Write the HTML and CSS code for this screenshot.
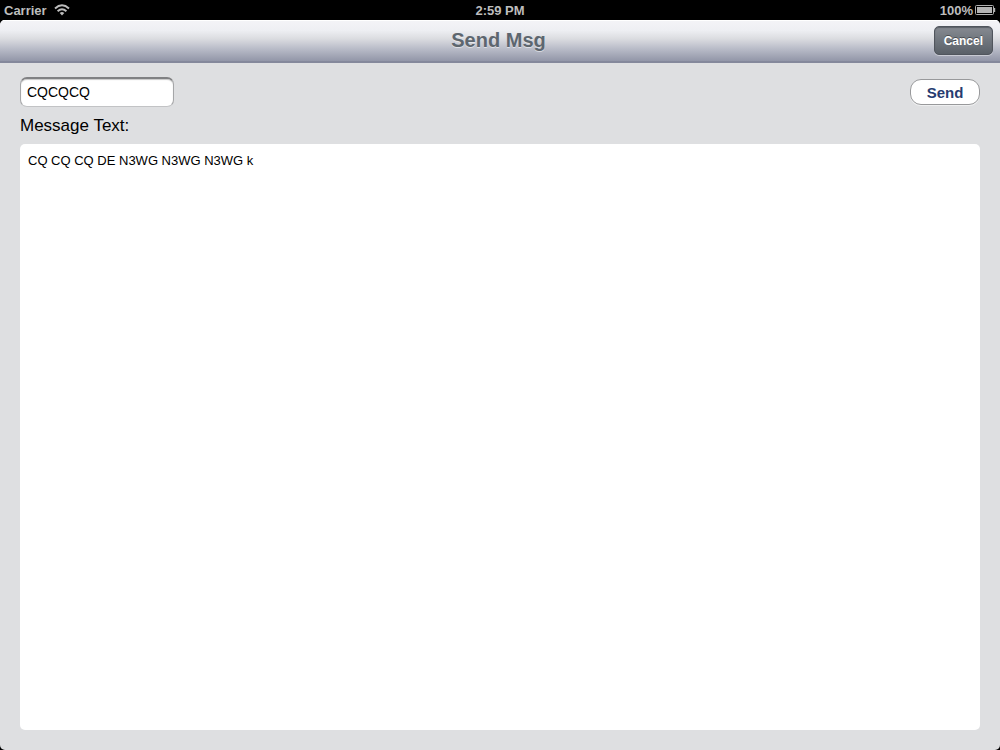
FILE: index.html
```html
<!DOCTYPE html>
<html lang="en">
<head>
<meta charset="utf-8">
<meta name="viewport" content="width=device-width, initial-scale=1">
<title>Send Msg</title>
<link rel="stylesheet" href="styles.css">
</head>
<body>
<div class="status">
  <div class="status-left">
    <span>Carrier</span>
    <svg class="wifi" viewBox="0 0 16 12" aria-hidden="true">
      <path d="M1 4.4Q8-1.8 15 4.4M3.6 7.2Q8 3.3 12.4 7.2" fill="none" stroke="#bdbdbd" stroke-width="2"/>
      <path d="M5.7 9Q8 7.2 10.3 9L8 11.4z" fill="#bdbdbd"/>
    </svg>
  </div>
  <time class="clock">2:59 PM</time>
  <div class="status-right">
    <span>100%</span>
    <svg class="battery" viewBox="0 0 21 10" aria-hidden="true">
      <rect x=".5" y=".5" width="18" height="9" rx="1" fill="none" stroke="#b0b0b0"/>
      <rect x="2" y="2" width="15" height="6" fill="#b4b4b4"/>
      <path d="M19 3h1.2v4H19z" fill="#b0b0b0"/>
    </svg>
  </div>
</div>
<form class="app">
  <header class="navbar">
    <h1 class="title">Send Msg</h1>
    <button class="cancel" type="button">Cancel</button>
  </header>
  <main class="content">
    <div class="row">
      <input class="name" type="text" value="CQCQCQ" aria-label="Message name">
      <button class="send" type="button">Send</button>
    </div>
    <label class="label" for="message">Message Text:</label>
    <textarea class="message" id="message">CQ CQ CQ DE N3WG N3WG N3WG k</textarea>
  </main>
</form>
</body>
</html>
```
FILE: styles.css
```css
* {
  box-sizing: border-box;
}

body {
  margin: 0;
  min-height: 100vh;
  display: flex;
  flex-direction: column;
  background: #000;
  font-family: "Liberation Sans", Arial, sans-serif;
}

button,
input,
textarea {
  font-family: inherit;
  margin: 0;
}

.status {
  display: grid;
  grid-template-columns: 1fr auto 1fr;
  align-items: center;
  height: 20px;
  padding: 0 4px;
  color: #bdbdbd;
  font-size: 13px;
  font-weight: bold;
}

.status-left,
.status-right {
  display: flex;
  align-items: center;
}

.status-left {
  gap: 7px;
}

.status-right {
  justify-content: flex-end;
  gap: 2px;
}

.wifi {
  width: 16px;
  height: 12px;
}

.battery {
  width: 21px;
  height: 10px;
}

.app {
  flex: 1;
  display: flex;
  flex-direction: column;
  overflow: hidden;
  border-radius: 5px;
  background: #dedfe1;
}

.navbar {
  display: grid;
  grid-template-columns: 1fr auto 1fr;
  align-items: center;
  height: 43px;
  padding: 0 7px 2px 4px;
  border-bottom: 2px solid #84889b;
  background: linear-gradient(#f4f4f7, #eeeff3 25%, #dcdde1 45%, #b9bcc8 70%, #9296a8);
  box-shadow: inset 0 1px #fff;
}

.title {
  grid-column: 2;
  margin: 0;
  color: #5d666f;
  font-size: 20px;
  line-height: 24px;
  text-shadow: 0 1px rgba(255, 255, 255, 0.5);
}

.cancel {
  justify-self: end;
  height: 29px;
  margin-top: 2px;
  padding: 0 9px;
  border: 1px solid #50555d;
  border-radius: 5px;
  background: linear-gradient(#878b92, #6f757d 50%, #5a6068);
  box-shadow: inset 0 1px 1px #5b6068, 0 1px rgba(255, 255, 255, 0.4);
  color: #fff;
  font-size: 12px;
  font-weight: bold;
  text-shadow: 0 -1px rgba(0, 0, 0, 0.4);
}

.content {
  flex: 1;
  display: flex;
  flex-direction: column;
  padding: 14px 20px 20px;
}

.row {
  display: flex;
  align-items: center;
  justify-content: space-between;
}

.name {
  width: 154px;
  height: 30px;
  padding: 0 6px 2px;
  border: 1px solid #a5a6a8;
  border-top: 2px solid #808183;
  border-bottom-color: #c2c3c5;
  border-radius: 7px;
  background: #fff;
  box-shadow: inset 0 1px 1px #c8c8c8;
  color: #000;
  font-size: 14px;
}

.send {
  width: 70px;
  height: 26px;
  padding: 0;
  border: 1px solid #98999b;
  border-radius: 11px;
  background: #fff;
  box-shadow: 0 1px #eeeff0;
  color: #273c70;
  font-size: 15px;
  font-weight: bold;
}

.label {
  padding: 9px 0 8px;
  color: #000;
  font-size: 17px;
  line-height: 20px;
}

.message {
  flex: 1;
  width: 100%;
  padding: 8px;
  border: 0;
  border-radius: 5px;
  background: #fff;
  color: #000;
  font-size: 13px;
  line-height: 18px;
  resize: none;
}
```
